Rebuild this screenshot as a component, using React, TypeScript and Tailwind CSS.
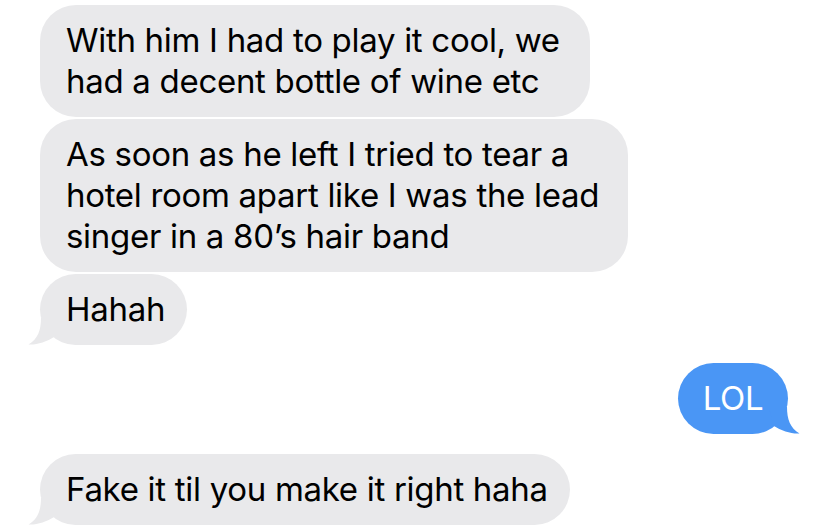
import React from "react";

function TailLeft({ color }: { color: string }) {
  return (
    <svg
      className="absolute left-[-12px] bottom-0"
      width="32"
      height="27"
      viewBox="0 0 32 27"
    >
      <path d="M13 0 C13 12 10 21 0.5 26.5 C 9 27 18 24 27 18.5 L 31 0 Z" fill={color} />
    </svg>
  );
}

function TailRight({ color }: { color: string }) {
  return (
    <svg
      className="absolute right-[-12px] bottom-0 -scale-x-100"
      width="32"
      height="27"
      viewBox="0 0 32 27"
    >
      <path d="M13 0 C13 12 10 21 0.5 26.5 C 9 27 18 24 27 18.5 L 31 0 Z" fill={color} />
    </svg>
  );
}

function Received({
  lines,
  width,
  tail,
}: {
  lines: string[];
  width: string;
  tail?: boolean;
}) {
  return (
    <div
      className={`relative ml-[40px] ${width} rounded-[36px] bg-[#e9e9eb] pl-[26px] py-[15px] text-[33px] leading-[41px] tracking-[-0.3px] text-black`}
    >
      {tail && <TailLeft color="#e9e9eb" />}
      {lines.map((l, i) => (
        <div key={i} className="relative whitespace-nowrap">
          {l}
        </div>
      ))}
    </div>
  );
}

export default function App() {
  return (
    <div
      className="w-[828px] h-[532px] bg-white overflow-hidden flex flex-col pt-[5px]"
      style={{ fontFamily: "Inter, 'Liberation Sans', sans-serif" }}
    >
      <Received
        width="w-[550px]"
        lines={["With him I had to play it cool, we", "had a decent bottle of wine etc"]}
      />
      <div className="h-[2px]" />
      <Received
        width="w-[588px]"
        lines={[
          "As soon as he left I tried to tear a",
          "hotel room apart like I was the lead",
          "singer in a 80\u2019s hair band",
        ]}
      />
      <div className="h-[2px]" />
      <Received width="w-[147px]" lines={["Hahah"]} tail />
      <div className="h-[18px]" />
      <div className="flex justify-end pr-[40px]">
        <div className="relative w-[110px] rounded-[36px] bg-[#4a96f5] py-[15px] text-center text-[33px] leading-[41px] tracking-[-0.3px] text-white">
          <TailRight color="#4a96f5" />
          <span className="relative">LOL</span>
        </div>
      </div>
      <div className="h-[20px]" />
      <Received width="w-[530px]" lines={["Fake it til you make it right haha"]} tail />
    </div>
  );
}
